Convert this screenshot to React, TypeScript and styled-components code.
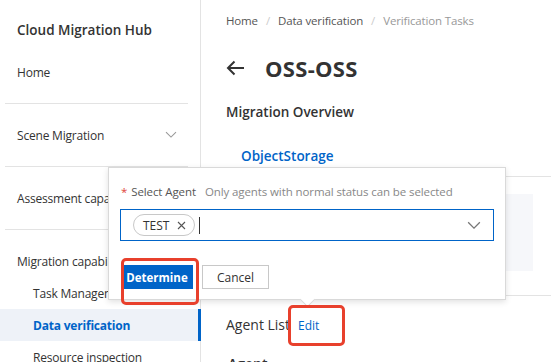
import React from "react";
import styled, { createGlobalStyle } from "styled-components";

const Global = createGlobalStyle`
  html, body { margin: 0; padding: 0; background: #fff; }
  body { font-family: "Open Sans", "Noto Sans", Arial, sans-serif; color: #333; }
  * { box-sizing: border-box; }
`;

const Page = styled.div`
  position: relative;
  display: flex;
  width: 551px;
  height: 362px;
  overflow: hidden;
  background: #fff;
`;

const Sidebar = styled.nav`
  width: 201px;
  flex: none;
  border-right: 1px solid #e3e3e3;
  display: flex;
  flex-direction: column;
  background: #fff;
  & > * { flex-shrink: 0; }
`;

const Brand = styled.div`
  padding: 20px 0 0 17px;
  height: 41px;
  line-height: 20px;
  font-size: 13.5px;
  font-weight: 600;
  color: #333;
  white-space: nowrap;
`;

const Section = styled.div`
  padding: 15px 0;
  display: flex;
  flex-direction: column;
`;

const Divider = styled.div`
  height: 1px;
  background: #e3e3e3;
  margin: 0 12px 0 5px;
`;

const Item = styled.div<{ $sub?: boolean; $active?: boolean }>`
  height: 32px;
  flex: none;
  display: flex;
  align-items: center;
  justify-content: space-between;
  padding-left: ${(p) => (p.$sub ? "33px" : "17px")};
  padding-right: 21px;
  font-size: 12px;
  letter-spacing: -0.2px;
  white-space: nowrap;
  overflow: hidden;
  color: ${(p) => (p.$active ? "#0064c8" : "#333")};
  font-weight: ${(p) => (p.$active ? 700 : 400)};
  background: ${(p) => (p.$active ? "#eef2f8" : "transparent")};
  border-right: 3px solid ${(p) => (p.$active ? "#0064c8" : "transparent")};
  margin-right: -1px;
`;

const Main = styled.main`
  flex: 1;
  min-width: 0;
  padding-left: 25px;
  display: flex;
  flex-direction: column;
  & > * { flex-shrink: 0; }
`;

const Breadcrumb = styled.div`
  display: flex;
  gap: 8px;
  padding-top: 13px;
  height: 29px;
  line-height: 16px;
  font-size: 11.5px;
  letter-spacing: -0.15px;
  white-space: nowrap;
`;

const Crumb = styled.span<{ $current?: boolean }>`
  color: ${(p) => (p.$current ? "#999" : "#555")};
`;

const Sep = styled.span`
  color: #ccc;
`;

const TitleRow = styled.div`
  display: flex;
  align-items: center;
  gap: 20px;
  height: 64px;
  padding-top: 14px;
`;

const Title = styled.h1`
  margin: 0;
  font-size: 22px;
  font-weight: 700;
  color: #333;
  letter-spacing: 0.3px;
`;

const SectionTitle = styled.h2`
  margin: 4px 0 0;
  height: 30px;
  display: flex;
  align-items: center;
  font-size: 13.5px;
  font-weight: 600;
  color: #333;
`;

const Tabs = styled.div`
  margin-top: 19px;
  height: 31px;
  border-bottom: 1px solid #e3e3e3;
  margin-right: -20px;
  display: flex;
`;

const Tab = styled.div`
  padding-left: 15px;
  font-size: 13.5px;
  font-weight: 600;
  color: #0064c8;
  line-height: 20px;
`;

const Card = styled.div`
  margin-top: 17px;
  margin-right: 18px;
  height: 77px;
  background: #f6f7fa;
`;

const Rule = styled.div`
  margin-top: 24px;
  height: 1px;
  background: #e3e3e3;
  margin-right: -20px;
`;

const ListHead = styled.div`
  display: flex;
  align-items: center;
  gap: 8px;
  height: 56px;
`;

const ListTitle = styled.span`
  font-size: 14px;
  color: #333;
`;

const EditLink = styled.span`
  font-size: 12px;
  color: #0064c8;
  padding-top: 2px;
`;

const NextHead = styled.div`
  font-size: 14px;
  font-weight: 600;
  color: #333;
  padding: 2px 0 0 2px;
`;

const Popover = styled.div`
  position: absolute;
  left: 108px;
  top: 167px;
  width: 398px;
  height: 133px;
  background: #fff;
  border: 1px solid #d9d9d9;
  box-shadow: 0 2px 6px rgba(0, 0, 0, 0.12);
  padding: 14px 11px 0 12px;
  display: flex;
  flex-direction: column;
  &::after {
    content: "";
    position: absolute;
    left: 193px;
    bottom: -6px;
    width: 10px;
    height: 10px;
    background: #fff;
    border-right: 1px solid #d9d9d9;
    border-bottom: 1px solid #d9d9d9;
    transform: rotate(45deg);
  }
`;

const Label = styled.div`
  display: flex;
  align-items: center;
  gap: 9px;
  height: 18px;
  font-size: 11.5px;
  letter-spacing: -0.1px;
  white-space: nowrap;
`;

const Req = styled.span`
  color: #555;
  &::before {
    content: "*";
    color: #e0453a;
    margin-right: 4px;
  }
`;

const Hint = styled.span`
  color: #888;
`;

const Select = styled.div`
  margin-top: 9px;
  margin-left: -1px;
  height: 32px;
  border: 1px solid #0064c8;
  display: flex;
  align-items: center;
  padding: 0 12px;
  gap: 4px;
`;

const Tag = styled.span`
  display: inline-flex;
  align-items: center;
  gap: 8px;
  height: 22px;
  padding: 0 8px 0 9px;
  border: 1px solid #c8c8c8;
  border-radius: 11px;
  font-size: 12px;
  color: #333;
`;

const Caret = styled.span`
  width: 1px;
  height: 17px;
  background: #333;
`;

const Chevron = styled.svg`
  margin-left: auto;
  flex: none;
`;

const Actions = styled.div`
  margin-top: 24px;
  display: flex;
  gap: 9px;
`;

const Button = styled.button<{ $primary?: boolean }>`
  height: 24px;
  padding: 0;
  width: ${(p) => (p.$primary ? "72px" : "67px")};
  font-family: inherit;
  font-size: ${(p) => (p.$primary ? "11.5px" : "12px")};
  font-weight: ${(p) => (p.$primary ? 700 : 400)};
  color: ${(p) => (p.$primary ? "#fff" : "#333")};
  background: ${(p) => (p.$primary ? "#0064c8" : "#fff")};
  border: 1px solid ${(p) => (p.$primary ? "#0064c8" : "#c8c8c8")};
  border-radius: 0;
`;

const Highlight = styled.div<{ $x: number; $y: number; $w: number; $h: number }>`
  position: absolute;
  left: ${(p) => p.$x}px;
  top: ${(p) => p.$y}px;
  width: ${(p) => p.$w}px;
  height: ${(p) => p.$h}px;
  border: 3px solid #e8402c;
  border-radius: 5px;
  pointer-events: none;
`;

const Down = ({ color, size }: { color: string; size: number }) => (
  <Chevron width={size} height={size * 0.6} viewBox="0 0 12 7">
    <path d="M1 1l5 5 5-5" fill="none" stroke={color} strokeWidth="1.1" />
  </Chevron>
);

export default function App() {
  return (
    <>
      <Global />
      <Page>
        <Sidebar>
          <Brand>Cloud Migration Hub</Brand>
          <Section>
            <Item>Home</Item>
          </Section>
          <Divider />
          <Section>
            <Item>
              Scene Migration
              <Down color="#999" size={12} />
            </Item>
          </Section>
          <Divider />
          <Section>
            <Item>Assessment capabilities</Item>
          </Section>
          <Divider />
          <Section>
            <Item>Migration capabilities</Item>
            <Item $sub>Task Management</Item>
            <Item $sub $active>Data verification</Item>
            <Item $sub>Resource inspection</Item>
          </Section>
        </Sidebar>
        <Main>
          <Breadcrumb>
            <Crumb>Home</Crumb>
            <Sep>/</Sep>
            <Crumb>Data verification</Crumb>
            <Sep>/</Sep>
            <Crumb $current>Verification Tasks</Crumb>
          </Breadcrumb>
          <TitleRow>
            <svg width="19" height="16" viewBox="0 0 19 16">
              <path d="M18 8H2M8.5 1.5L2 8l6.5 6.5" fill="none" stroke="#333" strokeWidth="2" />
            </svg>
            <Title>OSS-OSS</Title>
          </TitleRow>
          <SectionTitle>Migration Overview</SectionTitle>
          <Tabs>
            <Tab>ObjectStorage</Tab>
          </Tabs>
          <Card />
          <Rule />
          <ListHead>
            <ListTitle>Agent List</ListTitle>
            <EditLink>Edit</EditLink>
          </ListHead>
          <NextHead>Agent</NextHead>
        </Main>
        <Popover>
          <Label>
            <Req>Select Agent</Req>
            <Hint>Only agents with normal status can be selected</Hint>
          </Label>
          <Select>
            <Tag>
              TEST
              <svg width="9" height="9" viewBox="0 0 9 9">
                <path d="M1 1l7 7M8 1L1 8" stroke="#555" strokeWidth="1.1" />
              </svg>
            </Tag>
            <Caret />
            <Down color="#777" size={14} />
          </Select>
          <Actions>
            <Button $primary>Determine</Button>
            <Button>Cancel</Button>
          </Actions>
        </Popover>
        <Highlight $x={121} $y={258} $w={78} $h={47} />
        <Highlight $x={288} $y={305} $w={57} $h={41} />
      </Page>
    </>
  );
}
